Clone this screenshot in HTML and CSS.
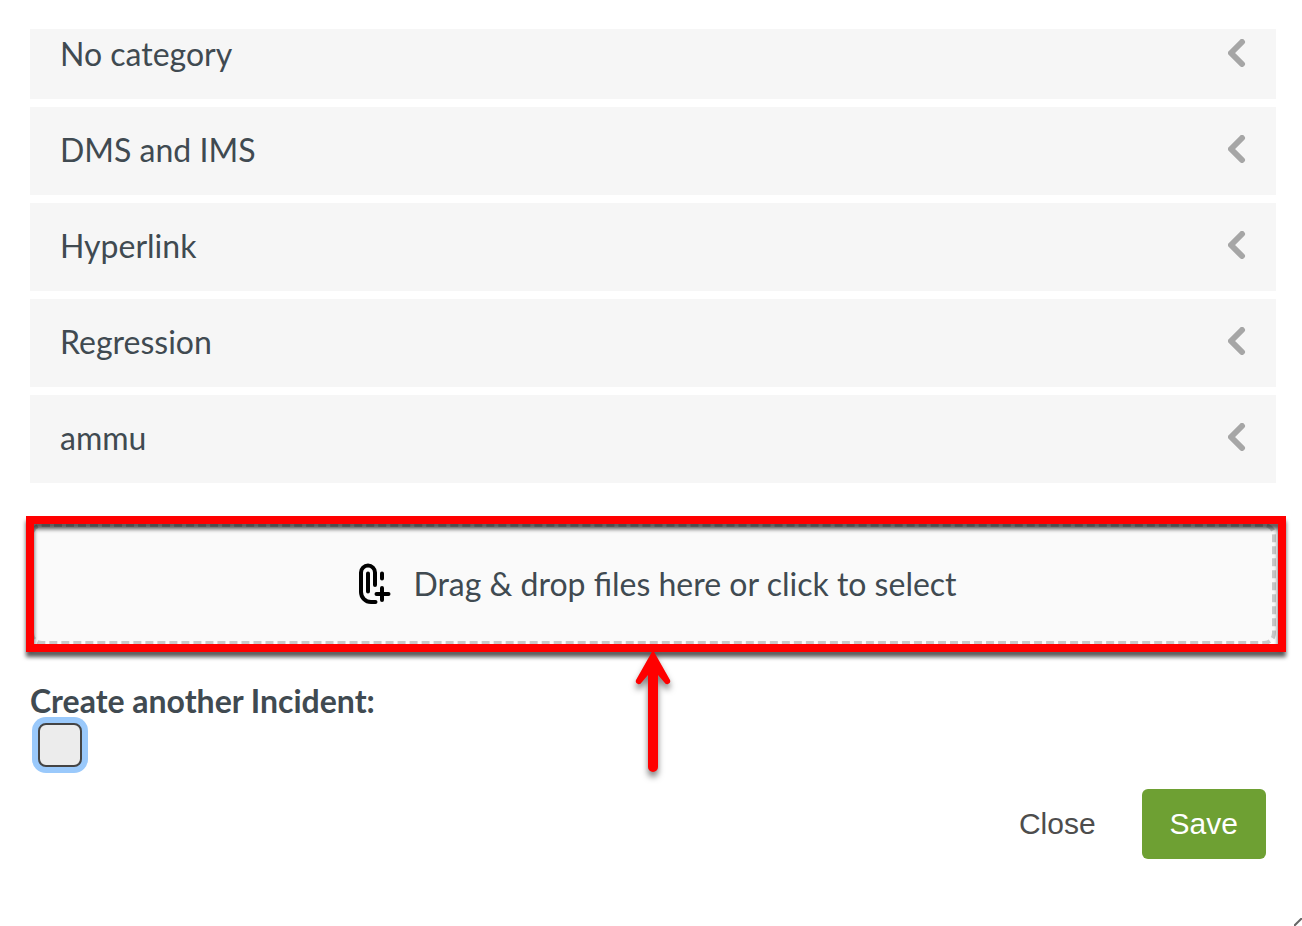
FILE: index.html
```
<!DOCTYPE html>
<html lang="en">
<head>
    <meta charset="UTF-8">
    <meta name="viewport" content="width=device-width, initial-scale=1.0">
    <title>Create Incident</title>
    <link rel="stylesheet" href="styles.css">
</head>
<body>
    <form class="incident-form">
        <div class="categories">
            <button type="button" class="category">
                <span>No category</span>
                <svg class="chevron" viewBox="0 0 18 28"><path d="M14 3 L3 14 L14 25"/></svg>
            </button>
            <button type="button" class="category">
                <span>DMS and IMS</span>
                <svg class="chevron" viewBox="0 0 18 28"><path d="M14 3 L3 14 L14 25"/></svg>
            </button>
            <button type="button" class="category">
                <span>Hyperlink</span>
                <svg class="chevron" viewBox="0 0 18 28"><path d="M14 3 L3 14 L14 25"/></svg>
            </button>
            <button type="button" class="category">
                <span>Regression</span>
                <svg class="chevron" viewBox="0 0 18 28"><path d="M14 3 L3 14 L14 25"/></svg>
            </button>
            <button type="button" class="category">
                <span>ammu</span>
                <svg class="chevron" viewBox="0 0 18 28"><path d="M14 3 L3 14 L14 25"/></svg>
            </button>
        </div>

        <div class="upload">
            <label class="dropzone" for="files">
                <svg class="clip" viewBox="0 0 32 42">
                    <path d="M16 22 V9.5 a7 7 0 0 0 -14 0 V29 a10 10 0 0 0 10 10 h4.5"/>
                    <path d="M9 10.5 V28.5 M23 10.5 V15.5 M23 25 V37 M17.5 31 H29.5"/>
                </svg>
                <span>Drag &amp; drop files here or click to select</span>
            </label>
            <input type="file" id="files" name="files" class="file-input" multiple>
            <div class="highlight"></div>
            <svg class="arrow" viewBox="0 0 50 136">
                <path d="M25 0 L42 30 Q43 33 40 34 Q38 35 36 32 L30 25 V117 a5 5 0 0 1 -10 0 V25 L14 32 Q12 35 10 34 Q7 33 8 30 Z"/>
            </svg>
        </div>

        <div class="another">
            <label for="another">Create another Incident:</label>
            <input type="checkbox" id="another" name="another" class="checkbox">
        </div>

        <div class="actions">
            <button type="button" class="btn">Close</button>
            <button type="submit" class="btn btn-save">Save</button>
        </div>
    </form>
    <svg class="resize" viewBox="0 0 8 8"><path d="M0 8 L8 0"/></svg>
</body>
</html>
```

FILE: styles.css
```
* {
    box-sizing: border-box;
}
body {
    margin: 0;
    min-height: 100vh;
    background-color: #fff;
    color: #404a51;
    font-family: Lato, sans-serif;
    font-size: 32px;
    line-height: 40px;
}
.incident-form {
    padding: 29px 26px 0 30px;
}
.categories {
    display: flex;
    flex-direction: column;
    gap: 8px;
    overflow: hidden;
}
.category {
    display: flex;
    align-items: center;
    justify-content: space-between;
    height: 88px;
    padding: 0 30px 2px;
    border: none;
    background-color: #f6f6f6;
    color: inherit;
    font: inherit;
    text-align: left;
    cursor: pointer;
}
/* first row is partly scrolled out of view */
.category:first-child {
    margin-top: -18px;
}
.chevron {
    width: 18px;
    height: 28px;
    margin-bottom: 2px;
    fill: none;
    stroke: #a6a6a6;
    stroke-width: 6;
    stroke-linecap: round;
    stroke-linejoin: round;
}
.upload {
    position: relative;
    margin-top: 40px;
}
.dropzone {
    display: flex;
    align-items: center;
    justify-content: center;
    gap: 22px;
    height: 122px;
    padding-left: 10px;
    border: 4px dashed #c8c8c8;
    border-radius: 12px;
    background-color: #fafafa;
    cursor: pointer;
}
.clip {
    width: 32px;
    height: 42px;
    fill: none;
    stroke: #000;
    stroke-width: 4;
    stroke-linecap: round;
}
.file-input {
    position: absolute;
    width: 1px;
    height: 1px;
    opacity: 0;
}
.highlight {
    position: absolute;
    top: -7px;
    right: -10px;
    bottom: -7px;
    left: -4px;
    border: 8px solid #f00;
    filter: drop-shadow(0 5px 2px rgba(0, 0, 0, 0.65));
    pointer-events: none;
}
.arrow {
    position: absolute;
    top: 127px;
    left: 50%;
    width: 50px;
    height: 136px;
    margin-left: -25px;
    fill: #f00;
    filter: drop-shadow(0 5px 3px rgba(0, 0, 0, 0.5));
    pointer-events: none;
}
.another {
    display: flex;
    flex-direction: column;
    align-items: flex-start;
    margin-top: 36px;
    font-weight: bold;
}
.checkbox {
    appearance: none;
    width: 44px;
    height: 44px;
    margin: 2px 8px 0;
    border: 2px solid #444;
    border-radius: 8px;
    background-color: #ececec;
    box-shadow: 0 0 0 6px #9ac9fb;
}
.actions {
    display: flex;
    justify-content: flex-end;
    gap: 18px;
    margin-top: 22px;
    padding-right: 10px;
}
.btn {
    height: 70px;
    padding: 0 28px;
    border: none;
    border-radius: 6px;
    background-color: transparent;
    color: #4d4d4d;
    font-family: "Liberation Sans", Arial, sans-serif;
    font-size: 30px;
    cursor: pointer;
}
.btn-save {
    background-color: #6ea033;
    color: #fff;
}
.resize {
    position: fixed;
    right: 0;
    bottom: 0;
    width: 8px;
    height: 8px;
    fill: none;
    stroke: #666;
    stroke-width: 2;
}
```
